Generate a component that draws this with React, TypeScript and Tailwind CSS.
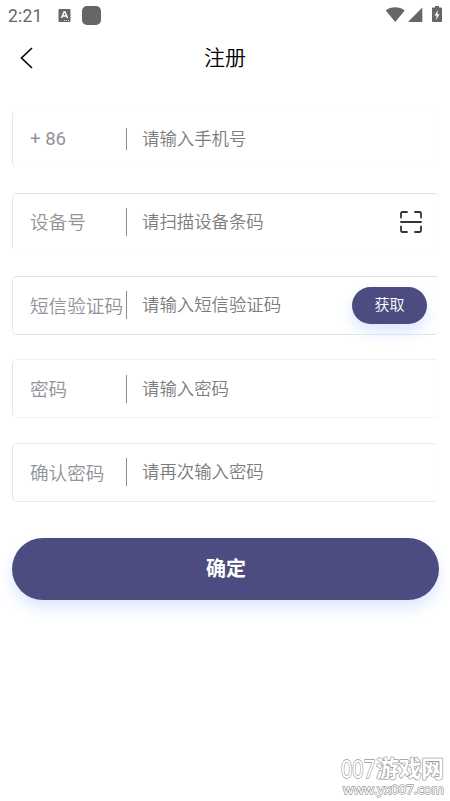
import type { ReactNode } from "react";
import clsx from "clsx";

type FieldProps = {
  label: string;
  placeholder: string;
  border: string;
  divider?: string;
  labelClass?: string;
  children?: ReactNode;
};

function Field({
  label,
  placeholder,
  border,
  divider = "h-7",
  labelClass = "pt-[3px] font-[350]",
  children,
}: FieldProps) {
  return (
    <div
      className={clsx(
        "flex w-full items-center rounded-[5px] border border-r-[#fcfcfc] border-l-[#e6e6e8] pl-[17px] pr-[11px]",
        border
      )}
    >
      <span
        className={clsx(
          "w-24 shrink-0 whitespace-nowrap text-[18.6px] leading-7 text-[#909399]",
          labelClass
        )}
      >
        {label}
      </span>
      <span className={clsx("w-px shrink-0 bg-[#8c8c8c]", divider)} />
      <input
        className="ml-[15px] min-w-0 flex-1 text-[17.4px] font-[350] leading-7 outline-none placeholder:text-[#7c7c7c]"
        placeholder={placeholder}
      />
      {children}
    </div>
  );
}

function StatusBar() {
  return (
    <div className="flex h-[30px] items-center px-2 text-[#666]">
      <span className="w-[50px] pt-px font-[Roboto] text-[17.5px] leading-5 tracking-[0.2px]">
        2:21
      </span>
      <svg width="13" height="13" viewBox="0 0 13 13">
        <rect x="0.5" width="12" height="13" rx="1" fill="#666" />
        <path d="M3.5 9 6 3h1l2.5 6M4.5 7h4" fill="none" stroke="#fff" strokeWidth="1.5" />
        <path d="M6 11.5h1m1 0h1m1 0h1" stroke="#fff" strokeWidth="0.8" />
      </svg>
      <span className="ml-[11px] h-[19px] w-[19px] rounded-[5px] bg-[#666]" />
      <svg width="58" height="18" viewBox="0 0 58 18" className="ml-auto mr-[-1px]" fill="#666">
        <path d="M0.7 4.5C6 0.3 14.4 0.3 19.7 4.5L10.2 16Z" />
        <path d="M37.3 1.5V16H23Z" />
        <path d="M50 0h4v1.5h2.2q.8 0 .8.8v12.9q0 .8-.8.8h-8.4q-.8 0-.8-.8V2.3q0-.8.8-.8H50Z" />
        <path d="M53 4 49.5 9.5h2.2L51 14l3.5-5.8h-2.2Z" fill="#fff" />
      </svg>
    </div>
  );
}

function ScanIcon() {
  return (
    <svg
      width="24"
      height="24"
      viewBox="0 0 24 24"
      className="mr-[4px] shrink-0"
      fill="none"
      stroke="#333"
      strokeWidth="1.8"
      strokeLinecap="round"
    >
      <path d="M2 7.5V3.5Q2 2 3.5 2H8M16 2h4.5Q22 2 22 3.5V7.5M22 16.5v4q0 1.5-1.5 1.5H16M8 22H3.5Q2 22 2 20.5V16.5M2 12h20" />
    </svg>
  );
}

function App() {
  return (
    <div className="relative h-[801px] w-[450px] overflow-hidden bg-white font-['Roboto','Noto_Sans_CJK_SC',sans-serif]">
      <StatusBar />

      <header className="grid h-[55px] grid-cols-[40px_1fr_40px] items-center text-black">
        <svg width="14" height="24" viewBox="0 0 14 24" className="ml-5" fill="none" stroke="#000" strokeWidth="1.6">
          <path d="M12 2 1.5 12 12 22" />
        </svg>
        <h1 className="text-center text-[21px] font-[350] leading-8">注册</h1>
      </header>

      <main className="pl-3 pr-[11px]">
        <div className="mt-[25px] grid grid-cols-1 grid-rows-[58px_58px_59px_59px_59px] gap-y-[24.8px]">
          <Field
            label="+ 86"
            placeholder="请输入手机号"
            border="border-y-[#fcfcfc]"
            divider="h-[22px]"
            labelClass="font-normal"
          />
          <Field
            label="设备号"
            placeholder="请扫描设备条码"
            border="border-t-[#e4e4e6] border-b-[#fcfcfc]"
          >
            <ScanIcon />
          </Field>
          <Field
            label="短信验证码"
            placeholder="请输入短信验证码"
            border="border-y-[#e2e2e4]"
          >
            <button className="h-[37px] w-[75px] shrink-0 rounded-full bg-[#4c4c80] text-[15px] font-[350] text-white shadow-[0_8px_16px_#dbe8ff]">
              获取
            </button>
          </Field>
          <Field label="密码" placeholder="请输入密码" border="border-y-[#f2f2f3]" />
          <Field
            label="确认密码"
            placeholder="请再次输入密码"
            border="border-y-[#ebebec] pb-0.5"
            labelClass="pt-[5px] font-[350]"
          />
        </div>
        <button className="mt-9 h-[62px] w-full rounded-full bg-[#4c4c80] pl-px text-xl font-bold text-white shadow-[0_8px_16px_#dbe8ff]">
          确定
        </button>
      </main>

      {/* site watermark */}
      <svg
        width="112"
        height="56"
        className="absolute bottom-0 right-0"
        fill="#fff"
        stroke="#999"
        strokeWidth="1.4"
        strokeLinejoin="round"
        style={{ paintOrder: "stroke" }}
        fontFamily="'Noto Sans','Noto Sans CJK SC',sans-serif"
      >
        <text x="3" y="32.5" fontSize="25" textLength="34" lengthAdjust="spacingAndGlyphs">007</text>
        <text x="38" y="32" fontSize="23" fontWeight="700" textLength="68" lengthAdjust="spacingAndGlyphs">游戏网</text>
        <text x="5" y="49" fontSize="13" textLength="101" lengthAdjust="spacingAndGlyphs">www.yx007.com</text>
      </svg>
    </div>
  );
}

export default App;
